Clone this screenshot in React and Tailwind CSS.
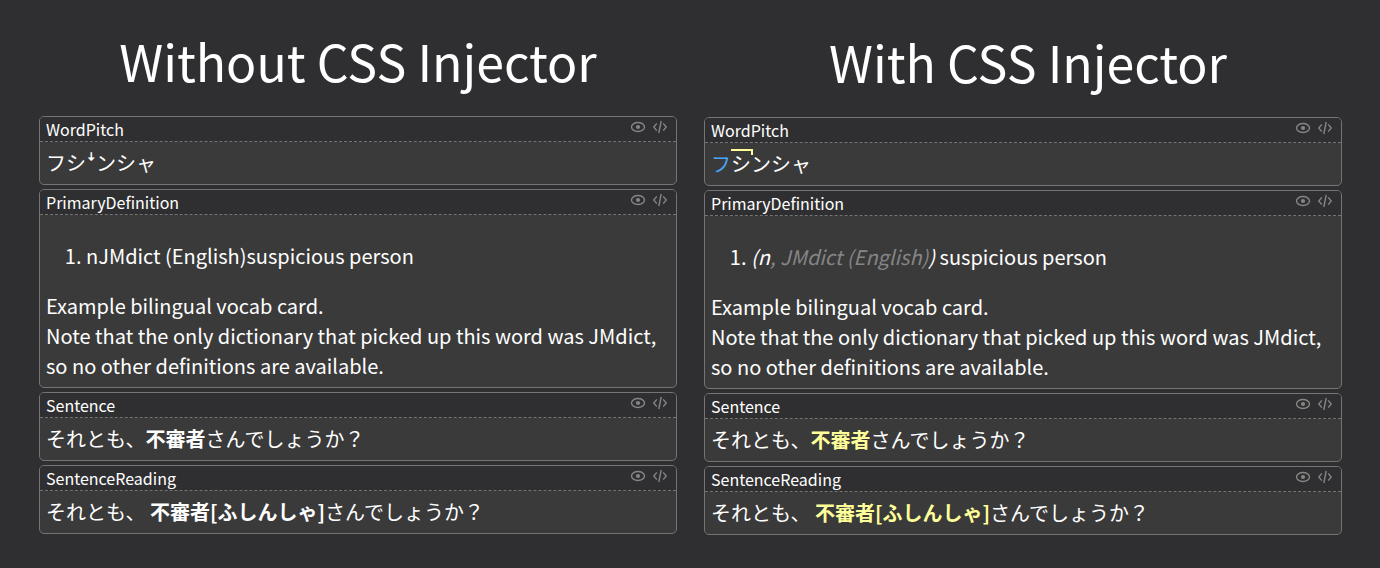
import React from "react";

function EyeIcon() {
  return (
    <svg viewBox="0 0 16 16" className="h-4 w-4" fill="none" aria-hidden="true">
      <ellipse cx="8" cy="8" rx="6.500" ry="4.500" stroke="currentColor" strokeWidth="1.4" />
      <circle cx="8" cy="8" r="2.1" fill="currentColor" />
    </svg>
  );
}

function CodeIcon() {
  return (
    <svg viewBox="0 0 16 16" className="h-4 w-4" fill="none" stroke="currentColor" strokeWidth="1.4" aria-hidden="true">
      <path d="M4.800 4.400 1.800 8l3 3.600M11.200 4.400l3 3.600-3 3.600M9.200 2 6.800 14" />
    </svg>
  );
}

function Field({ name, children }) {
  return (
    <section className="overflow-hidden rounded-[5px] border border-[#747474] bg-[#3a3a3a]">
      <header className="flex h-[25px] items-start justify-between border-b border-dashed border-[#747474] bg-[#2f2f31] pr-2 pl-1.5">
        <h2 className="text-[16px] leading-[25px]">{name}</h2>
        <div className="flex gap-1.5 pt-0.5 text-[#858585]">
          <button type="button" aria-label={"Preview " + name}><EyeIcon /></button>
          <button type="button" aria-label={"Edit HTML of " + name}><CodeIcon /></button>
        </div>
      </header>
      <div className="p-1.5 text-[20px] leading-[30px]">{children}</div>
    </section>
  );
}

function Definition({ children }) {
  return (
    <>
      <ol className="my-5 list-decimal pl-10">
        <li>{children}</li>
      </ol>
      <p>
        Example bilingual vocab card.
        <br />
        Note that the only dictionary that picked up this word was JMdict, so no other definitions are available.
      </p>
    </>
  );
}

function Column({ title, className, titleClass, accent, pitch, definition }) {
  return (
    <article className={className}>
      <h1 className={"text-center text-[50px] leading-[76px] " + titleClass}>{title}</h1>
      <div className="mt-[18px] flex flex-col gap-1">
        <Field name="WordPitch">{pitch}</Field>
        <Field name="PrimaryDefinition">
          <Definition>{definition}</Definition>
        </Field>
        <Field name="Sentence">
          それとも、<b className={accent}>不審者</b>さんでしょうか？
        </Field>
        <Field name="SentenceReading">
          それとも、 <b className={accent}>不審者[ふしんしゃ]</b>さんでしょうか？
        </Field>
      </div>
    </article>
  );
}

export default function App() {
  return (
    <main
      lang="ja"
      className="grid min-h-screen grid-cols-2 content-start gap-x-[27px] bg-[#2f2f31] pt-[22px] pr-[38px] pl-[39px] font-['Noto_Sans_CJK_JP',sans-serif] text-white"
    >
      <Column
        title="Without CSS Injector"
        titleClass=""
        accent="font-bold"
        pitch="フシꜜンシャ"
        definition="nJMdict (English)suspicious person"
      />
      <Column
        title="With CSS Injector"
        titleClass="pl-[10px]"
        className="pt-px"
        accent="font-bold text-[#ffff99]"
        pitch={
          <>
            <span className="text-[#4ba3f5]">フ</span>
            <span className="relative inline-block">
              シ
              <span className="absolute top-0 left-0 h-1.5 w-[22px] border-t-2 border-r-2 border-[#ffff99]" />
            </span>
            ンシャ
          </>
        }
        definition={
          <>
            <i>
              (n<span className="text-[#858585]">, JMdict (English)</span>)
            </i>{" "}
            suspicious person
          </>
        }
      />
    </main>
  );
}
